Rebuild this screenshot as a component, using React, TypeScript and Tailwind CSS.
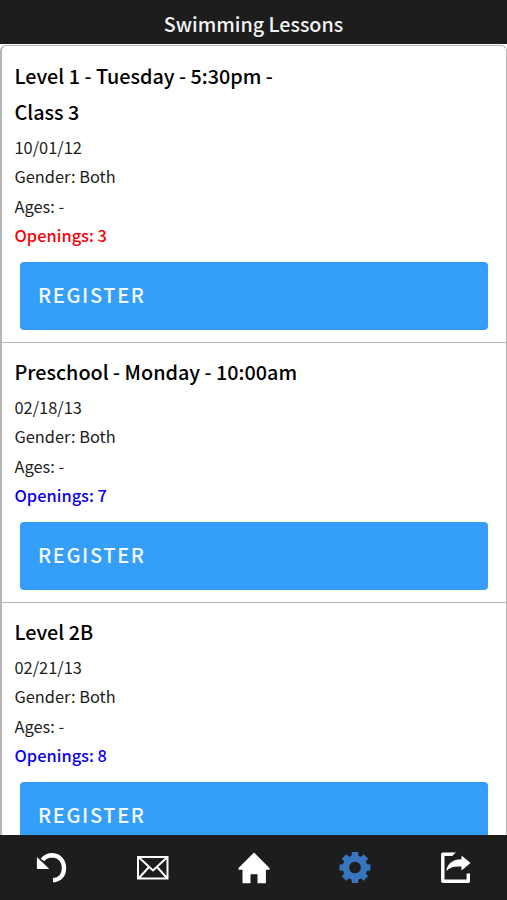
type Lesson = {
  title: string[];
  date: string;
  openings: number;
  color: string;
};

const lessons: Lesson[] = [
  { title: ["Level 1 - Tuesday - 5:30pm -", "Class 3"], date: "10/01/12", openings: 3, color: "text-[#fb0007]" },
  { title: ["Preschool - Monday - 10:00am"], date: "02/18/13", openings: 7, color: "text-[#0b00e6]" },
  { title: ["Level 2B"], date: "02/21/13", openings: 8, color: "text-[#0b00e6]" },
];

function LessonItem({ lesson }: { lesson: Lesson }) {
  return (
    <li className="border-b border-[#b5b5b5] pt-[11.5px] pb-[12px]">
      <h2 className="pl-[12.5px] text-[19.8px] font-medium leading-[36.5px] text-black">
        {lesson.title.map((line) => (
          <span key={line} className="block">{line}</span>
        ))}
      </h2>
      <div className="mt-[2.2px] pl-[12.5px] text-[16.4px] leading-[29.4px] text-[#1c1c1c]">
        <p>{lesson.date}</p>
        <p>Gender: Both</p>
        <p>Ages: -</p>
        <p className={`font-medium ${lesson.color}`}>Openings: {lesson.openings}</p>
      </div>
      <button className="mt-[11.2px] mr-[17px] ml-[18px] flex h-[68px] w-[468px] items-center rounded-[4px] bg-[#359ef8] pb-[2px] pl-[18px] text-[20px] font-medium tracking-[1.65px] text-[#f4faff]">
        REGISTER
      </button>
    </li>
  );
}

export default function App() {
  return (
    <div className="flex h-[900px] w-[507px] flex-col overflow-hidden bg-white font-['Noto_Sans_CJK_JP',sans-serif]">
      <header className="flex h-[44px] shrink-0 items-center justify-center bg-[#1d1d1d] pt-[4px] text-[19.7px] font-medium text-[#f2f2f2]">
        Swimming Lessons
      </header>
      <main className="min-h-0 flex-1 overflow-hidden pt-px">
        <ul className="rounded-t-[6px] border-t border-r border-l-2 border-[#b5b5b5]">
          {lessons.map((lesson) => (
            <LessonItem key={lesson.date} lesson={lesson} />
          ))}
        </ul>
      </main>
      <nav className="grid h-[65px] shrink-0 grid-cols-5 bg-[#1d1d1d] pt-[15px] pl-px text-white">
        <a className="flex justify-center" aria-label="Back">
          <svg width="34" height="34" viewBox="0 0 34 34">
            <path d="M7.500 10C10 6.500 14 5.300 17.500 5.300C24.500 5.600 29 11 29 18C29 25 25 29.800 18 30.200" fill="none" stroke="currentColor" strokeWidth="4.400" />
            <path d="M1.900 7V19H14.300L10.500 15.200L6 11Z" fill="currentColor" />
          </svg>
        </a>
        <a className="flex justify-center" aria-label="Mail">
          <svg width="34" height="34" viewBox="0 0 34 34" fill="none" stroke="currentColor">
            <path d="M2 7H31.500V28.500H2Z" strokeWidth="2" />
            <path d="M3 7.500L17 20.500L31 7.500M3 28L13 17M31 28L21 17" strokeWidth="2" />
          </svg>
        </a>
        <a className="flex justify-center" aria-label="Home">
          <svg width="34" height="34" viewBox="0 0 34 34" fill="currentColor">
            <path d="M17 2.500L32.500 17.900V19.700H28.900V33.200H20.500V24.200H13.500V33.200H5.500V19.700H1.500V17.900Z" />
          </svg>
        </a>
        <a className="flex justify-center text-[#3776be]" aria-label="Settings">
          <svg width="34" height="34" viewBox="-17 -17.500 34 34">
            <circle r="9.100" fill="none" stroke="currentColor" strokeWidth="6.500" />
            {[0, 45, 90, 135, 180, 225, 270, 315].map((angle) => (
              <path key={angle} d="M-3.600 -10L-3.100 -15.500H3.100L3.600 -10Z" fill="currentColor" transform={`rotate(${angle})`} />
            ))}
          </svg>
        </a>
        <a className="flex justify-center" aria-label="Share">
          <svg width="34" height="34" viewBox="0 0 34 34">
            <path d="M13.500 4.300H3.800V31.300H29.300V23.500" fill="none" stroke="currentColor" strokeWidth="3.400" strokeLinejoin="round" />
            <path d="M12 2.600H17L13 6H11ZM22.500 5.500L31.500 13L22.500 20.500V16.500C15.500 16 11 17 7.300 21C8 14 13.500 9.200 22.500 9.200Z" fill="currentColor" />
          </svg>
        </a>
      </nav>
    </div>
  );
}
